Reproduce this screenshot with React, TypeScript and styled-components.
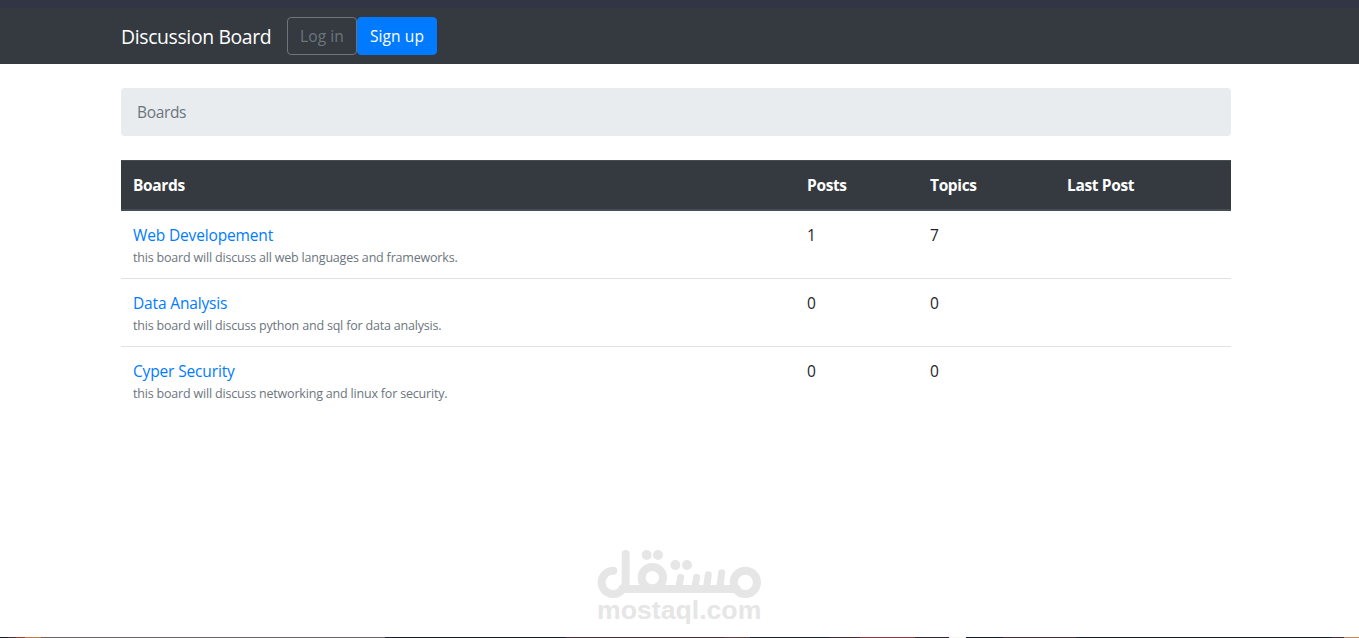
import React from "react";
import styled, { createGlobalStyle } from "styled-components";

const Global = createGlobalStyle`
  *, *::before, *::after { box-sizing: border-box; }
  body {
    margin: 0;
    background: #fff;
    color: #212529;
    font: 400 15.5px/24px "Open Sans", "Noto Sans", sans-serif;
    overflow: hidden;
  }
`;

const Page = styled.div`
  display: flex;
  flex-direction: column;
  height: 638px;
`;

const Navbar = styled.nav`
  height: 64px;
  padding: 9px 0 0;
  background: #343a40;
  border-top: 8px solid #323544;
`;

const Container = styled.div`
  width: 1110px;
  margin-left: 121px;
`;

const NavRow = styled(Container)`
  display: flex;
  align-items: center;
`;

const Text = styled.span<{ $ls?: number }>`
  letter-spacing: ${(p) => p.$ls ?? 0}px;
  white-space: nowrap;
`;

const Brand = styled.a`
  width: 150px;
  margin-right: 16px;
  padding-top: 2px;
  color: #fff;
  font-size: 19.4px;
  line-height: 30px;
  white-space: nowrap;
`;

const Button = styled.a<{ $primary?: boolean }>`
  display: flex;
  justify-content: center;
  align-items: center;
  width: ${(p) => (p.$primary ? 80 : 70)}px;
  height: 38px;
  border: 1px solid ${(p) => (p.$primary ? "#007bff" : "#6c757d")};
  border-radius: 4px;
  background: ${(p) => (p.$primary ? "#007bff" : "transparent")};
  color: ${(p) => (p.$primary ? "#fff" : "#6c757d")};
`;

const Breadcrumb = styled.div`
  height: 48px;
  margin: 24px 0;
  padding: 12px 16px;
  border-radius: 4px;
  background: #e9ecef;
  color: #6c757d;
`;

const Row = styled.div`
  display: grid;
  grid-template-columns: 674px 123px 137px 176px;
  height: 68px;
  border-bottom: 1px solid #dee2e6;
  &:last-child { border-bottom: 0; }
`;

const HeadRow = styled(Row)`
  height: 51px;
  background: #343a40;
  border-top: 1px solid #454d55;
  border-bottom: 2px solid #454d55;
  color: #fff;
  font-weight: 700;
`;

const Cell = styled.div`
  padding: 12px;
`;

const BoardLink = styled.a`
  display: block;
  height: 24px;
  color: #007bff;
`;

const Description = styled.small`
  display: block;
  color: #6c757d;
  font-size: 12.5px;
  line-height: 22px;
`;

const Watermark = styled.svg`
  flex: none;
  align-self: flex-start;
  width: 180px;
  height: 97px;
  margin: auto 0 0 590px;
`;

const Strip = styled.div`
  display: flex;
  flex: none;
  height: 1px;
`;

const Segment = styled.i<{ $w: number; $c: string }>`
  width: ${(p) => p.$w}px;
  background: ${(p) => p.$c};
`;

const boards = [
  { name: "Web Developement", text: "this board will discuss all web languages and frameworks.", posts: 1, topics: 7 },
  { name: "Data Analysis", text: "this board will discuss python and sql for data analysis.", posts: 0, topics: 0 },
  { name: "Cyper Security", text: "this board will discuss networking and linux for security.", posts: 0, topics: 0 },
];

const headings = ["Boards", "Posts", "Topics", "Last Post"];

const segments: [number, string][] = [
  [8, "#181c2b"], [8, "#4a2f36"], [9, "#963f3b"], [16, "#c07c3f"], [344, "#686465"],
  [181, "#151c2b"], [158, "#4a2d35"], [26, "#5b3a3d"], [80, "#181f2d"],
  [30, "#3f2c33"], [55, "#90373e"], [34, "#30242f"], [17, "#f4f4f4"], [37, "#151c2b"],
  [73, "#4b2b34"], [256, "#151c2b"], [12, "#4b2b34"], [8, "#b98b6b"], [7, "#c98c4f"],
];

export default function App() {
  return (
    <Page>
      <Global />
      <Navbar>
        <NavRow>
          <Brand><Text $ls={-0.36}>Discussion Board</Text></Brand>
          <Button><Text $ls={0.1}>Log in</Text></Button>
          <Button $primary><Text $ls={0.1}>Sign up</Text></Button>
        </NavRow>
      </Navbar>
      <Container>
        <Breadcrumb><Text $ls={-0.35}>Boards</Text></Breadcrumb>
        <div>
          <HeadRow>
            {headings.map((h) => <Cell key={h}><Text $ls={-0.35}>{h}</Text></Cell>)}
          </HeadRow>
          {boards.map((b) => (
            <Row key={b.name}>
              <Cell>
                <BoardLink><Text $ls={-0.15}>{b.name}</Text></BoardLink>
                <Description><Text $ls={-0.19}>{b.text}</Text></Description>
              </Cell>
              <Cell>{b.posts}</Cell>
              <Cell>{b.topics}</Cell>
              <Cell />
            </Row>
          ))}
        </div>
      </Container>
      <Watermark viewBox="0 0 540 291">
        <g fill="none" stroke="#e6e6e6" strokeWidth="24" strokeLinecap="round" strokeLinejoin="round">
          <path d="M70 92A35 35 0 1 0 92 154Q107 144 107 125V42" />
          <path d="M96 147H440" />
          <circle cx="187" cy="113" r="32" />
          <circle cx="466" cy="127" r="35" />
          <path strokeWidth="21" d="M272 112L266 145M320 112L314 145M355 104L349 145M395 98L389 145" />
        </g>
        <g fill="#e6e6e6">
          <circle cx="170" cy="45" r="15" />
          <circle cx="204" cy="45" r="15" />
          <circle cx="256" cy="75" r="15" />
          <circle cx="291" cy="75" r="15" />
          <text x="21" y="237" fontFamily="Liberation Sans" fontWeight="700" fontSize="80" textLength="493" lengthAdjust="spacingAndGlyphs">mostaql.com</text>
        </g>
      </Watermark>
      <Strip>
        {segments.map(([w, c], i) => <Segment key={i} $w={w} $c={c} />)}
      </Strip>
    </Page>
  );
}
